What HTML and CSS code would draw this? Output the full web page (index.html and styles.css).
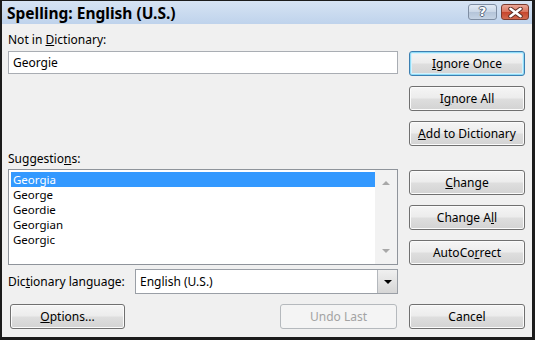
FILE: index.html
```html
<!DOCTYPE html>
<html>
<head>
<meta charset="utf-8">
<link rel="stylesheet" href="styles.css">
</head>
<body>
<div class="window">
  <div class="titlebar">
    <div class="title">Spelling: English (U.S.)</div>
    <div class="caption-btns">
      <div class="cap help"><span class="qmark">?</span></div>
      <div class="cap close">
        <svg width="15" height="11" viewBox="0 0 15 11">
          <path d="M2.5 1.8 L12.5 9.2 M12.5 1.8 L2.5 9.2" stroke="#5a2a22" stroke-width="4.4" stroke-linecap="round"/>
          <path d="M2.5 1.8 L12.5 9.2 M12.5 1.8 L2.5 9.2" stroke="#ffffff" stroke-width="2.6" stroke-linecap="round"/>
        </svg>
      </div>
    </div>
  </div>
  <div class="content">
    <div class="main">
      <div class="left">
        <div class="label">Not in <u>D</u>ictionary:</div>
        <div class="textbox">Georgie</div>
        <div class="label sugg-label">Suggestio<u>n</u>s:</div>
        <div class="listbox">
          <ul class="items">
            <li class="selected">Georgia</li>
            <li>George</li>
            <li>Geordie</li>
            <li>Georgian</li>
            <li>Georgic</li>
          </ul>
          <div class="scrollbar">
            <span class="tri-up"></span>
            <span class="tri-down"></span>
          </div>
        </div>
        <div class="lang-row">
          <span class="label lang-label">Dic<u>t</u>ionary language:</span>
          <div class="combo">
            <span class="combo-text">English (U.S.)</span>
            <div class="drop"><span class="tri-black"></span></div>
          </div>
        </div>
      </div>
      <div class="right">
        <div class="btn default"><u>I</u>gnore Once</div>
        <div class="btn">I<u>g</u>nore All</div>
        <div class="btn"><u>A</u>dd to Dictionary</div>
        <div class="btn group2"><u>C</u>hange</div>
        <div class="btn">Change A<u>l</u>l</div>
        <div class="btn">AutoCo<u>r</u>rect</div>
      </div>
    </div>
    <div class="bottom">
      <div class="btn options"><u>O</u>ptions...</div>
      <div class="btn disabled undo">Undo Last</div>
      <div class="btn cancel">Cancel</div>
    </div>
  </div>
</div>
</body>
</html>
```

FILE: styles.css
```css
html, body {
  margin: 0;
  padding: 0;
  background: #ffffff;
}

.window {
  width: 535px;
  height: 340px;
  box-sizing: border-box;
  border-style: solid;
  border-color: #1b1b1b;
  border-width: 1px 3px 3px 2px;
  background: #f0f0f0;
  display: flex;
  flex-direction: column;
  font-family: "Noto Sans", sans-serif;
  font-size: 12px;
  color: #000;
}

.titlebar {
  height: 23px;
  flex: none;
  display: flex;
  align-items: flex-start;
  padding: 0 3px 0 5px;
  background: linear-gradient(#d6e3f3, #bfd3ec);
}

.title {
  font-weight: bold;
  font-size: 15.5px;
  line-height: 20px;
  padding-top: 2px;
  color: #000;
}

.caption-btns {
  margin-left: auto;
  margin-top: 3px;
  display: flex;
  gap: 4px;
}

.cap {
  height: 16px;
  box-sizing: border-box;
  border-radius: 3px;
  display: flex;
  align-items: center;
  justify-content: center;
}

.help {
  width: 29px;
  border: 1px solid #7f8ea3;
  background: linear-gradient(#e3ebf5 0%, #c9d6e6 50%, #b4c4d9 51%, #c5d3e4 100%);
}

.qmark {
  font-family: "DejaVu Sans", sans-serif;
  font-weight: bold;
  font-size: 13px;
  line-height: 14px;
  color: #ffffff;
  text-shadow: 1px 0 0 #56657a, -1px 0 0 #56657a, 0 1px 0 #56657a, 0 -1px 0 #56657a;
}

.close {
  width: 28px;
  border: 1px solid #7b3b2e;
  background: linear-gradient(#eaa797 0%, #d9725c 50%, #c6452c 51%, #d36a4f 100%);
}

.content {
  flex: 1;
  display: flex;
  flex-direction: column;
  padding: 8px 7px 0 6px;
}

.main {
  display: flex;
  gap: 11px;
}

.left {
  width: 390px;
  display: flex;
  flex-direction: column;
}

.label {
  line-height: 16px;
  white-space: nowrap;
}

.textbox {
  margin-top: 3px;
  height: 23px;
  box-sizing: border-box;
  border: 1px solid #a9adb3;
  background: #ffffff;
  padding-left: 4px;
  line-height: 21px;
}

.sugg-label {
  margin-top: 77px;
}

.listbox {
  margin-top: 2px;
  height: 96px;
  box-sizing: border-box;
  border: 1px solid #8f949b;
  background: #ffffff;
  display: flex;
}

.items {
  flex: 1;
  list-style: none;
  margin: 0;
  padding: 2px 0 0 2px;
}

.items li {
  line-height: 15px;
  height: 15px;
  font-size: 11.5px;
  padding-left: 2px;
}

.items li.selected {
  background: #3399ff;
  color: #ffffff;
}

.scrollbar {
  width: 22px;
  background: #f2f2f2;
  display: flex;
  flex-direction: column;
  align-items: center;
  justify-content: space-between;
  padding: 11px 0 11px;
  box-sizing: border-box;
}

.tri-up {
  width: 0;
  height: 0;
  border-left: 4px solid transparent;
  border-right: 4px solid transparent;
  border-bottom: 4px solid #a8a8a8;
}

.tri-down {
  width: 0;
  height: 0;
  border-left: 4px solid transparent;
  border-right: 4px solid transparent;
  border-top: 4px solid #a8a8a8;
}

.lang-row {
  margin-top: 4px;
  height: 25px;
  display: flex;
  align-items: center;
}

.lang-label {
  width: 127px;
}

.combo {
  width: 263px;
  height: 25px;
  box-sizing: border-box;
  border: 1px solid #9a9fa6;
  background: #ffffff;
  display: flex;
  align-items: center;
}

.combo-text {
  padding-left: 4px;
  flex: 1;
}

.drop {
  width: 20px;
  height: 23px;
  box-sizing: border-box;
  border-left: 1px solid #b4b8bd;
  background: linear-gradient(#f0f0f0, #d6d6d6);
  display: flex;
  align-items: center;
  justify-content: center;
}

.tri-black {
  width: 0;
  height: 0;
  border-left: 4px solid transparent;
  border-right: 4px solid transparent;
  border-top: 4px solid #000000;
}

.right {
  width: 116px;
  display: flex;
  flex-direction: column;
  padding-top: 19px;
  gap: 10px;
}

.btn {
  height: 25px;
  box-sizing: border-box;
  border: 1px solid #707070;
  border-radius: 3px;
  background: linear-gradient(#f5f5f5 0%, #ececec 48%, #dedede 52%, #d3d3d3 100%);
  box-shadow: inset 0 0 0 1px #fbfbfb;
  text-align: center;
  line-height: 23px;
  white-space: nowrap;
}

.btn.default {
  border-color: #3c7fb1;
  box-shadow: inset 0 0 0 1px #8fdcf7, inset 0 0 0 2px #d6f1fc;
}

.btn.group2 {
  margin-top: 14px;
}

.bottom {
  margin-top: 10px;
  display: flex;
  gap: 12px;
}

.options {
  width: 115px;
  margin-left: 2px;
}

.undo {
  width: 117px;
  margin-left: auto;
}

.cancel {
  width: 116px;
}

.btn.disabled {
  border-color: #b5b9bd;
  background: #f4f4f4;
  box-shadow: none;
  color: #a3a3a3;
}
```
